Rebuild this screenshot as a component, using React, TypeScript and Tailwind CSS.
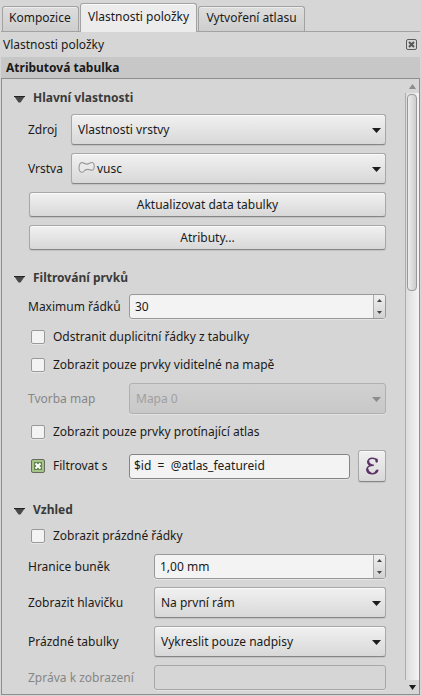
import type { ReactNode } from 'react';

const raised =
  'rounded-[3px] border border-[#a8a8a8] border-b-[#858585] bg-linear-to-b from-[#f1f1f1] to-[#d8d8d8] shadow-[inset_0_1px_0_#fafafa,0_1px_1px_#c2c2c2]';
const inset =
  'rounded-[3px] border border-[#999999] bg-[#f3f3f3] shadow-[0_1px_0_#e4e4e4]';

function Arrow({ className = '', up = false }: { className?: string; up?: boolean }) {
  return (
    <svg viewBox="0 0 10 6" preserveAspectRatio="none" className={`shrink-0 ${className}`} fill="currentColor">
      <path d={up ? 'M5 0 10 6H0Z' : 'M0 0H10L5 6Z'} />
    </svg>
  );
}

function Heading({ children, className }: { children: ReactNode; className: string }) {
  return (
    <div className={`flex h-5 items-center pl-3 font-bold text-[#3a3a3a] ${className}`}>
      <svg viewBox="0 0 11 7" className="mt-[3px] mr-2 h-[7px] w-[11px]">
        <path d="M.3.5H10.7L6.5 6.5H4.5Z" fill="#484848" />
        <path d="M0 .5H11" stroke="#222" />
      </svg>
      {children}
    </div>
  );
}

function Row({ label, labelWidth, className, disabled = false, children }: {
  label: string; labelWidth: string; className: string; disabled?: boolean; children: ReactNode;
}) {
  return (
    <div className={`flex items-center pl-[26px] ${className}`}>
      <span className={`shrink-0 ${labelWidth} ${disabled ? 'text-[#868686]' : ''}`}>{label}</span>
      {children}
    </div>
  );
}

function Combo({ children, disabled = false }: { children: ReactNode; disabled?: boolean }) {
  return (
    <div
      className={`flex h-[31px] flex-1 items-center pr-1 pl-1.5 ${
        disabled
          ? 'rounded-[3px] border border-[#b0b0b0] bg-linear-to-b from-[#d1d1d1] to-[#c8c8c8] text-[#a0a0a0] shadow-[0_1px_0_#e2e2e2]'
          : raised
      }`}
    >
      <span className="flex flex-1 items-center">{children}</span>
      <Arrow className={`mt-px h-[5px] w-[9px] ${disabled ? 'text-[#8c8c8c]' : 'text-[#1c1c1c]'}`} />
    </div>
  );
}

function Spin({ value }: { value: string }) {
  return (
    <div className={`flex h-[25px] flex-1 overflow-hidden ${inset}`}>
      <span className="flex flex-1 items-center pl-[5px]">{value}</span>
      <span className="flex w-3 flex-col items-center justify-between border-l border-[#aaa] bg-linear-to-b from-[#efefef] to-[#d2d2d2] py-[4px] text-[#444]">
        <Arrow up className="h-[3px] w-[5px]" />
        <Arrow className="h-[3px] w-[5px]" />
      </span>
    </div>
  );
}

function Box({ checked = false }: { checked?: boolean }) {
  return checked ? (
    <svg viewBox="0 0 14 14" className="mr-2 size-3.5 shrink-0">
      <rect x=".5" y=".5" width="13" height="13" rx="1.5" fill="#a4c586" stroke="#666b62" />
      <rect x="3" y="3" width="8" height="8" fill="#658450" />
      <path d="M4.5 4.5 9.5 9.5M9.5 4.5 4.5 9.5" stroke="#fff" strokeWidth="2" />
    </svg>
  ) : (
    <span className="mr-2 size-3.5 shrink-0 rounded-[2px] border border-[#999] bg-[#f3f3f3] shadow-[0_1px_0_#e6e6e6]" />
  );
}

function Check({ children, className }: { children: ReactNode; className: string }) {
  return (
    <div className={`flex h-3.5 items-center pl-[29px] ${className}`}>
      <Box />
      {children}
    </div>
  );
}

export default function App() {
  return (
    <div className="flex h-[696px] w-[421px] flex-col overflow-hidden bg-[#d6d6d6] px-px pb-px font-['Noto_Sans',sans-serif] text-[12px] leading-5 whitespace-nowrap text-[#1a1a1a]">
      <div className="flex h-8 shrink-0 items-end border-b border-[#a2a2a2] pl-px">
        <div className="flex h-[25px] w-[77px] rounded-t-[3px] border border-b-0 border-[#a2a2a2] bg-linear-to-b from-[#dddddd] to-[#cecece] pt-px pl-1.5 shadow-[inset_0_1px_0_#ededed]">Kompozice</div>
        <div className="z-10 -mb-px ml-px flex h-[29px] w-[117px] justify-center rounded-t-[3px] border border-b-0 border-[#a2a2a2] bg-[#ececec] pt-[3px] shadow-[inset_0_1px_0_#fafafa]">Vlastnosti položky</div>
        <div className="ml-px flex h-[25px] w-[107px] justify-center rounded-t-[3px] border border-b-0 border-[#a2a2a2] bg-linear-to-b from-[#dddddd] to-[#cecece] pt-px shadow-[inset_0_1px_0_#ededed]">Vytvoření atlasu</div>
      </div>
      <div className="flex h-[25px] shrink-0 items-center justify-between pr-[3px] pl-0.5">
        <span>Vlastnosti položky</span>
        <svg viewBox="0 0 11 11" className="size-[11px]">
          <rect x=".5" y=".5" width="10" height="10" rx="1.5" fill="none" stroke="#5b5b5b" />
          <path d="M3 3 8 8M8 3 3 8" stroke="#555" strokeWidth="2" />
        </svg>
      </div>
      <div className="h-[21px] shrink-0 bg-[#c7c7c7] pt-px pl-[5px] font-bold">Atributová tabulka</div>

      <div className="flex min-h-0 flex-1 border border-[#8e8e8e]">
        <div className="flex w-96 flex-col">
          <Heading className="mt-[9px]">Hlavní vlastnosti</Heading>
          <Row label="Zdroj" labelWidth="w-[43px]" className="mt-[6px] h-[31px]">
            <Combo>Vlastnosti vrstvy</Combo>
          </Row>
          <Row label="Vrstva" labelWidth="w-[43px]" className="mt-2 h-[31px]">
            <Combo>
              <svg viewBox="0 0 18 14" className="-mt-[2px] mr-px h-[14px] w-[18px]" fill="#e9e9e9" stroke="#999" strokeWidth="1.1">
                <path d="M3 1.8C5.5 1 6.3 3.2 9 3.1 11.3 3 12.5.7 14.8 1.6 16.6 2.7 16.3 6 15.8 8.2 15.2 10 13.2 9 11.3 8.6 8.8 8 7.1 8.4 5.8 10.2 4.7 11.7 2.6 11.7 1.6 9.8.7 7.6.7 3 3 1.8Z" />
              </svg>
              vusc
            </Combo>
          </Row>
          <div className={`mt-2 ml-[27px] flex h-[25px] items-center justify-center ${raised}`}>Aktualizovat data tabulky</div>
          <div className={`mt-2 ml-[27px] flex h-[25px] items-center justify-center ${raised}`}>Atributy...</div>

          <Heading className="mt-[18px]">Filtrování prvků</Heading>
          <Row label="Maximum řádků" labelWidth="w-[101px]" className="mt-[6px] h-[25px]">
            <Spin value="30" />
          </Row>
          <Check className="mt-[11px]">Odstranit duplicitní řádky z tabulky</Check>
          <Check className="mt-[14px]">Zobrazit pouze prvky viditelné na mapě</Check>
          <Row label="Tvorba map" labelWidth="w-[101px]" className="mt-[11px] h-[31px]" disabled>
            <Combo disabled>Mapa 0</Combo>
          </Row>
          <Check className="mt-[11px]">Zobrazit pouze prvky protínající atlas</Check>
          <div className="mt-[11px] flex h-8 items-center pl-[29px]">
            <Box checked />
            <span className="w-[76px]">Filtrovat s</span>
            <span className="flex h-[25px] w-[221px] items-center rounded-[3px] border border-[#858585] bg-[#f3f3f3] pl-1 whitespace-pre shadow-[0_1px_0_#e4e4e4]">{'$id  =  @atlas_featureid'}</span>
            <span className={`ml-2 flex h-8 w-7 items-center justify-center ${raised}`}>
              <svg viewBox="0 0 14 18" className="-mt-px h-[18px] w-[14px]" fill="none" stroke="#5c3566" strokeLinecap="round">
                <path d="M12 4.2C10.6.4 3.6.2 3.1 4.5 3 7.2 5 8.1 8.8 8.2 4.3 8.3 1.9 9.6 2 12.6 2.4 17.8 10.9 17.9 12.8 13.4" strokeWidth="1.5" />
                <path d="M3.2 4.5C3.2 6.5 4.2 7.4 5.7 7.9M2.4 12.4C2.6 14.5 3.6 15.5 5.2 16M11.6 2.6V4.6M12 13.8 11 15" strokeWidth="2.3" />
              </svg>
            </span>
          </div>

          <Heading className="mt-[18px]">Vzhled</Heading>
          <Check className="mt-[9px]">Zobrazit prázdné řádky</Check>
          <Row label="Hranice buněk" labelWidth="w-[126px]" className="mt-[11px] h-[25px]">
            <Spin value="1,00 mm" />
          </Row>
          <Row label="Zobrazit hlavičku" labelWidth="w-[126px]" className="mt-2 h-[31px]">
            <Combo>Na první rám</Combo>
          </Row>
          <Row label="Prázdné tabulky" labelWidth="w-[126px]" className="mt-2 h-[31px]">
            <Combo>Vykreslit pouze nadpisy</Combo>
          </Row>
          <Row label="Zpráva k zobrazení" labelWidth="w-[126px]" className="mt-2 h-[25px]" disabled>
            <span className="h-[25px] flex-1 rounded-[3px] border border-[#a8a8a8] shadow-[0_1px_0_#e2e2e2]" />
          </Row>
        </div>

        <div className="ml-auto flex w-[14px] flex-col items-center">
          <div className="flex h-[14px] items-center">
            <Arrow up className="h-[5px] w-[7px] text-[#8c8c8c]" />
          </div>
          <div className="w-full flex-1 border-l border-[#adadad] bg-linear-to-r from-[#dcdcdc] to-[#f4f4f4] pt-px pl-px">
            <div className="h-[197px] w-[10px] rounded-[4px] border border-[#989898] bg-linear-to-r from-[#ececec] to-[#cdcdcd]" />
          </div>
          <div className="flex h-[14px] items-center">
            <Arrow className="h-[5px] w-[7px] text-[#1c1c1c]" />
          </div>
        </div>
      </div>
    </div>
  );
}
